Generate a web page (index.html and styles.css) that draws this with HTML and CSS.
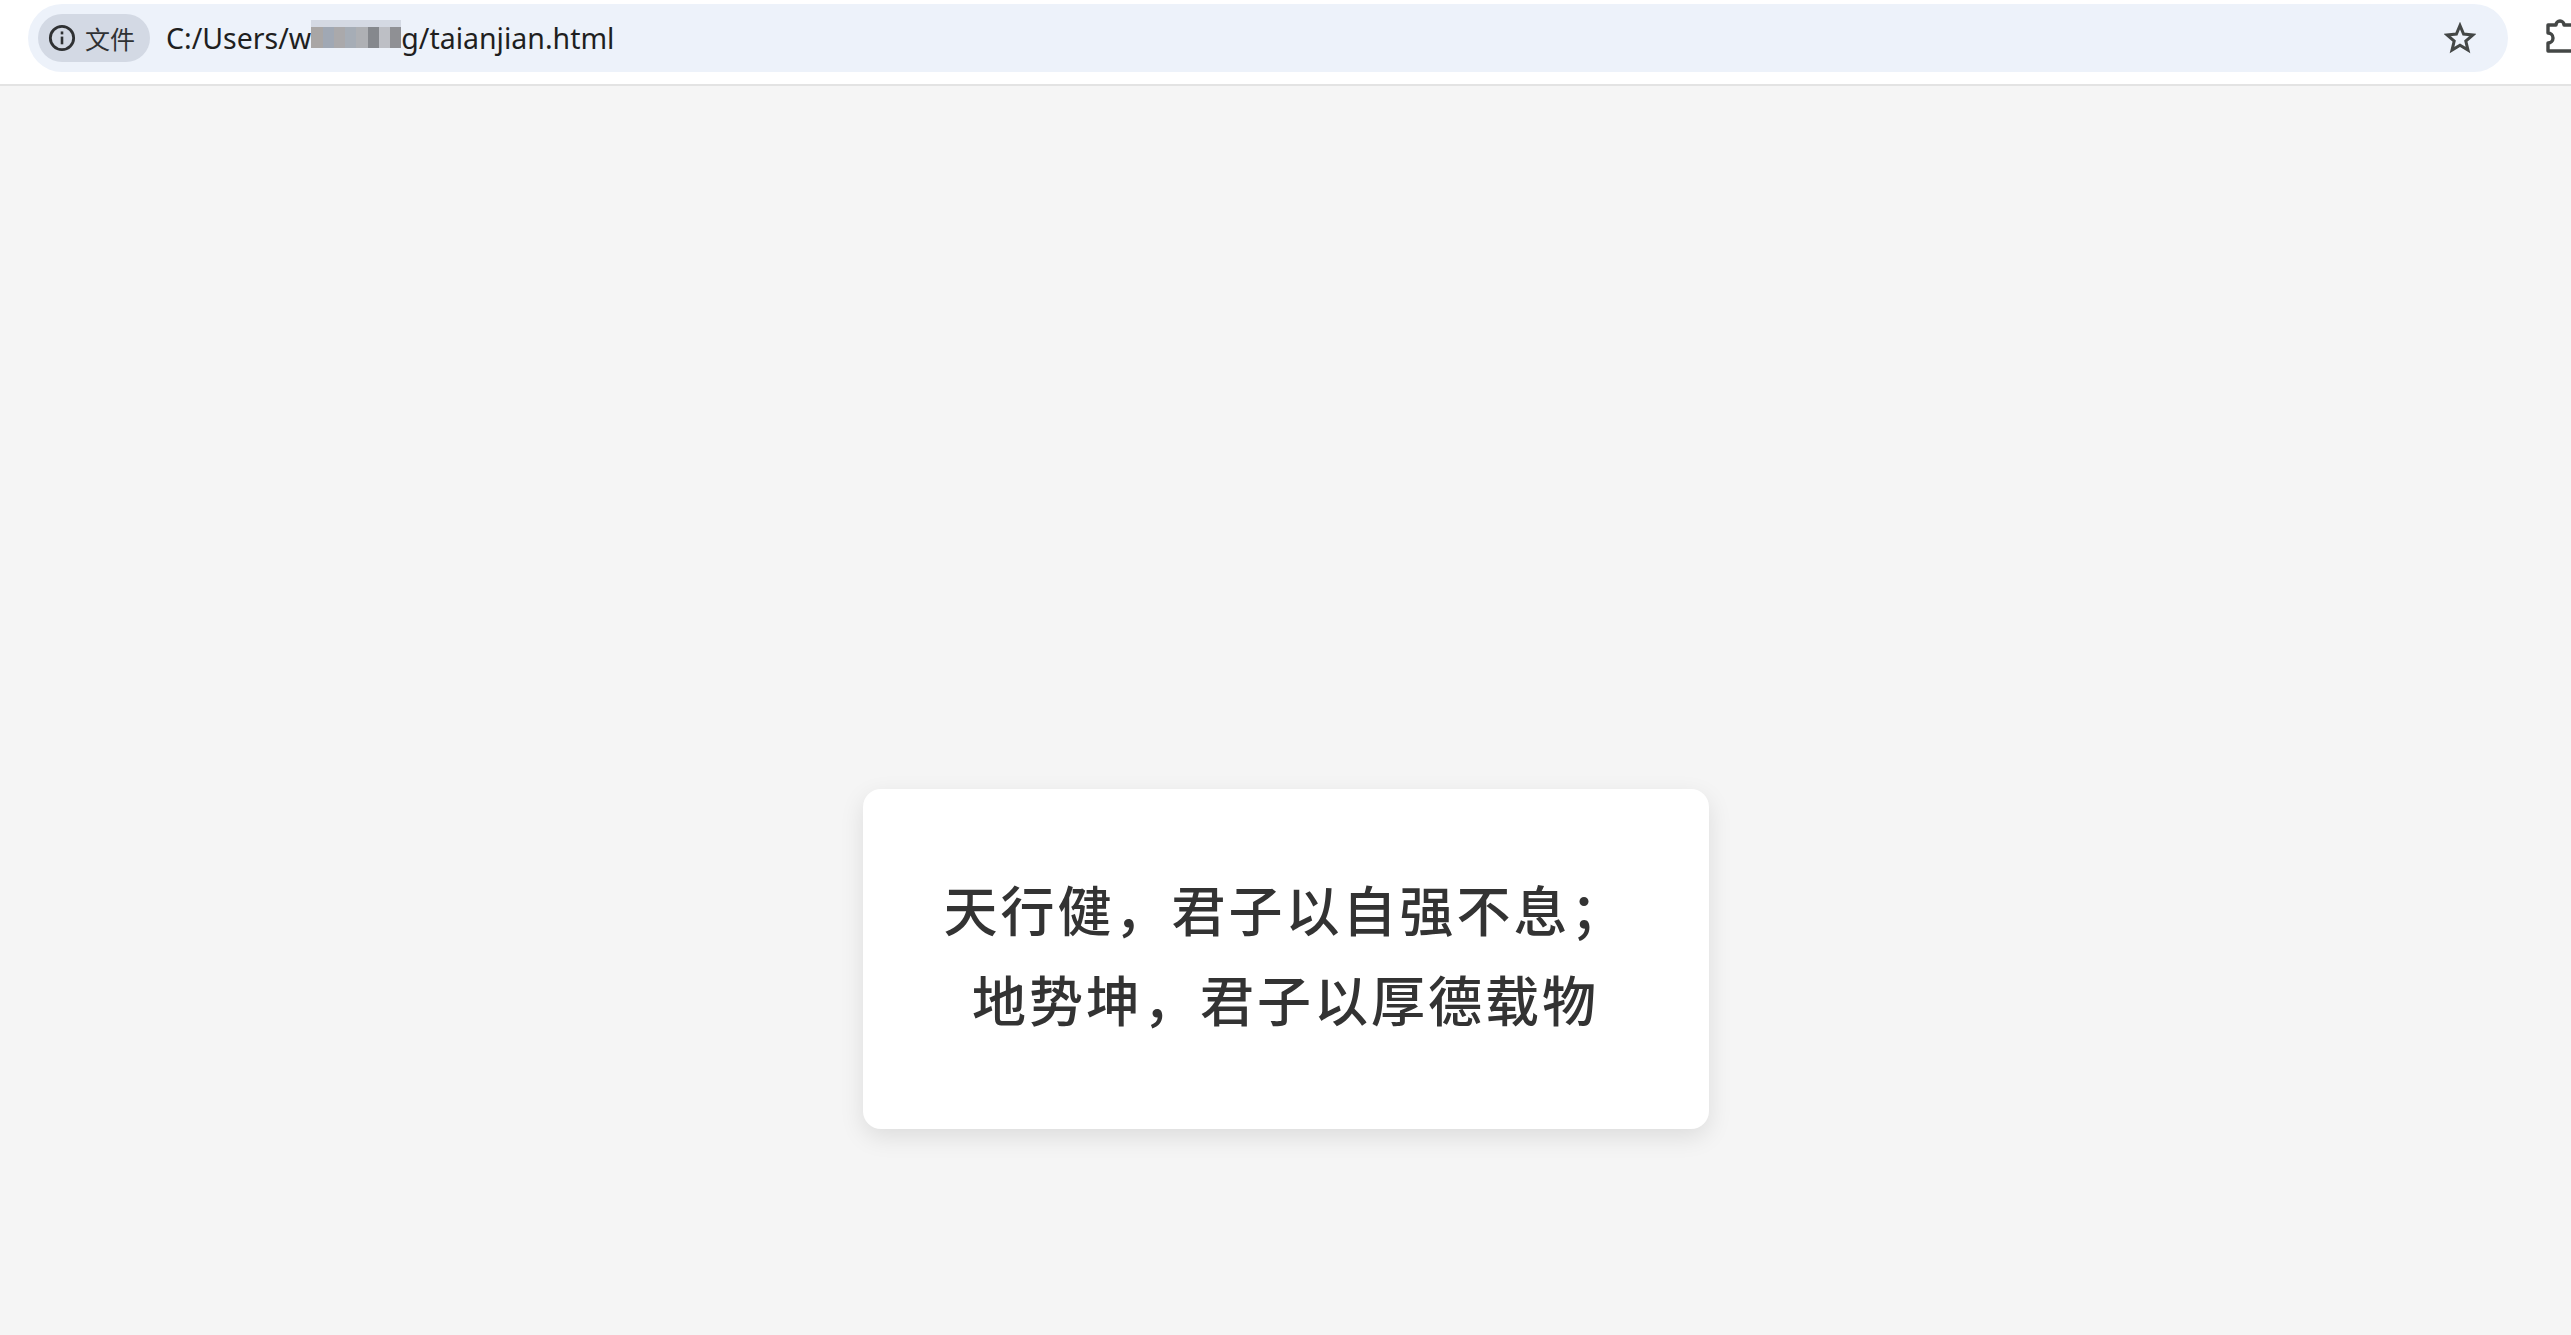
FILE: index.html
```html
<!DOCTYPE html>
<html>
  <head>
    <title>taianjian</title>
    <link rel="stylesheet" href="styles.css">
  </head>
  <body>
    <div class="toolbar">
      <div class="omnibox">
        <div class="chip">
          <svg class="info" viewBox="0 0 24 24">
            <circle cx="12" cy="12" r="10" fill="none" stroke="#2f3133" stroke-width="2.4"/>
            <rect x="10.9" y="10.8" width="2.2" height="6.6" fill="#2f3133"/>
            <rect x="10.9" y="6.4" width="2.2" height="2.5" fill="#2f3133"/>
          </svg>
          <span>文件</span>
        </div>
        <div class="url">
          <span>C:/Users/w</span>
          <span class="smudge">
            <i class="s1"></i><i class="s2"></i><i class="s3"></i><i class="s4"></i><i class="s5"></i><i class="s6"></i><i class="s7"></i><i class="s8"></i>
          </span>
          <span>g/taianjian.html</span>
        </div>
        <svg class="star" viewBox="0 0 32 32">
          <path d="M16 3.5l3.6 8.6 9.3.8-7.1 6.1 2.2 9.1-8-4.9-8 4.9 2.2-9.1-7.1-6.1 9.3-.8z" fill="none" stroke="#444746" stroke-width="3"/>
        </svg>
      </div>
      <svg class="puzzle" viewBox="0 0 40 40">
        <path d="M40 7H18a4 4 0 0 0-8 0H2v8a5 5 0 0 1 0 10v8h38" fill="none" stroke="#444746" stroke-width="3.4" stroke-linejoin="round"/>
      </svg>
    </div>
    <div class="page">
      <div class="card">
        <p>天行健，君子以自强不息；</p>
        <p>地势坤，君子以厚德载物</p>
      </div>
    </div>
  </body>
</html>
```
FILE: styles.css
```css
html, body {
  margin: 0;
  height: 100%;
}
body {
  display: flex;
  flex-direction: column;
  background: #f5f5f5;
  overflow: hidden;
}
.toolbar {
  display: flex;
  align-items: center;
  height: 76px;
  padding: 0 0 8px 28px;
  background: #fff;
  border-bottom: 2px solid #e3e3e3;
  overflow: hidden;
}
.omnibox {
  display: flex;
  align-items: center;
  flex: none;
  width: 2480px;
  height: 68px;
  padding: 0 10px;
  box-sizing: border-box;
  border-radius: 34px;
  background: #edf2fa;
}
.chip {
  display: flex;
  align-items: center;
  gap: 9px;
  width: 112px;
  height: 48px;
  padding-left: 10px;
  box-sizing: border-box;
  border-radius: 24px;
  background: #d3d9e4;
  color: #2f3133;
  font-family: "Noto Sans CJK SC", sans-serif;
  font-size: 25px;
}
.info {
  width: 28px;
  height: 28px;
}
.url {
  display: flex;
  align-items: center;
  flex: 1;
  margin-left: 16px;
  color: #1f1f1f;
  font-family: "Noto Sans", sans-serif;
  font-size: 28.5px;
  white-space: pre;
}
.smudge {
  display: flex;
  align-items: flex-start;
  width: 90px;
  height: 36px;
}
.smudge i {
  flex: 1;
  height: 21px;
  border-top: 7px solid #d4d9e3;
}
.s1 { background: #a9a6a5; border-top-color: #dde1ea; }
.s2 { background: #a0a8b4; height: 27px; }
.s3 { background: #aaa9ab; }
.s4 { background: #a6adb6; border-top-color: #dbe1ec; }
.s5 { background: #aeb0b4; border-top-color: #cfd3dc; }
.s6 { background: #85888d; height: 29px; border-top-color: #bcc0c8; }
.s7 { background: #bdbfc5; border-top-color: #d6dae3; }
.s8 { background: #8f9094; flex: 0.5; border-top-color: #d6dae3; }
.star {
  width: 32px;
  height: 32px;
  margin-right: 22px;
}
.puzzle {
  flex: none;
  width: 40px;
  height: 40px;
  margin-left: 38px;
}
.page {
  flex: 1;
  display: flex;
  align-items: flex-start;
  justify-content: center;
  padding-top: 703px;
}
.card {
  width: 846px;
  height: 340px;
  padding-top: 80px;
  box-sizing: border-box;
  border-radius: 18px;
  background: #fff;
  box-shadow: 0 8px 24px rgba(0, 0, 0, 0.1);
  color: #333;
  font-family: "Liberation Serif", "Noto Sans CJK SC", serif;
  font-size: 54px;
  font-weight: 500;
  letter-spacing: 3px;
  line-height: 90px;
  text-align: center;
}
.card p {
  margin: 0;
}
```
